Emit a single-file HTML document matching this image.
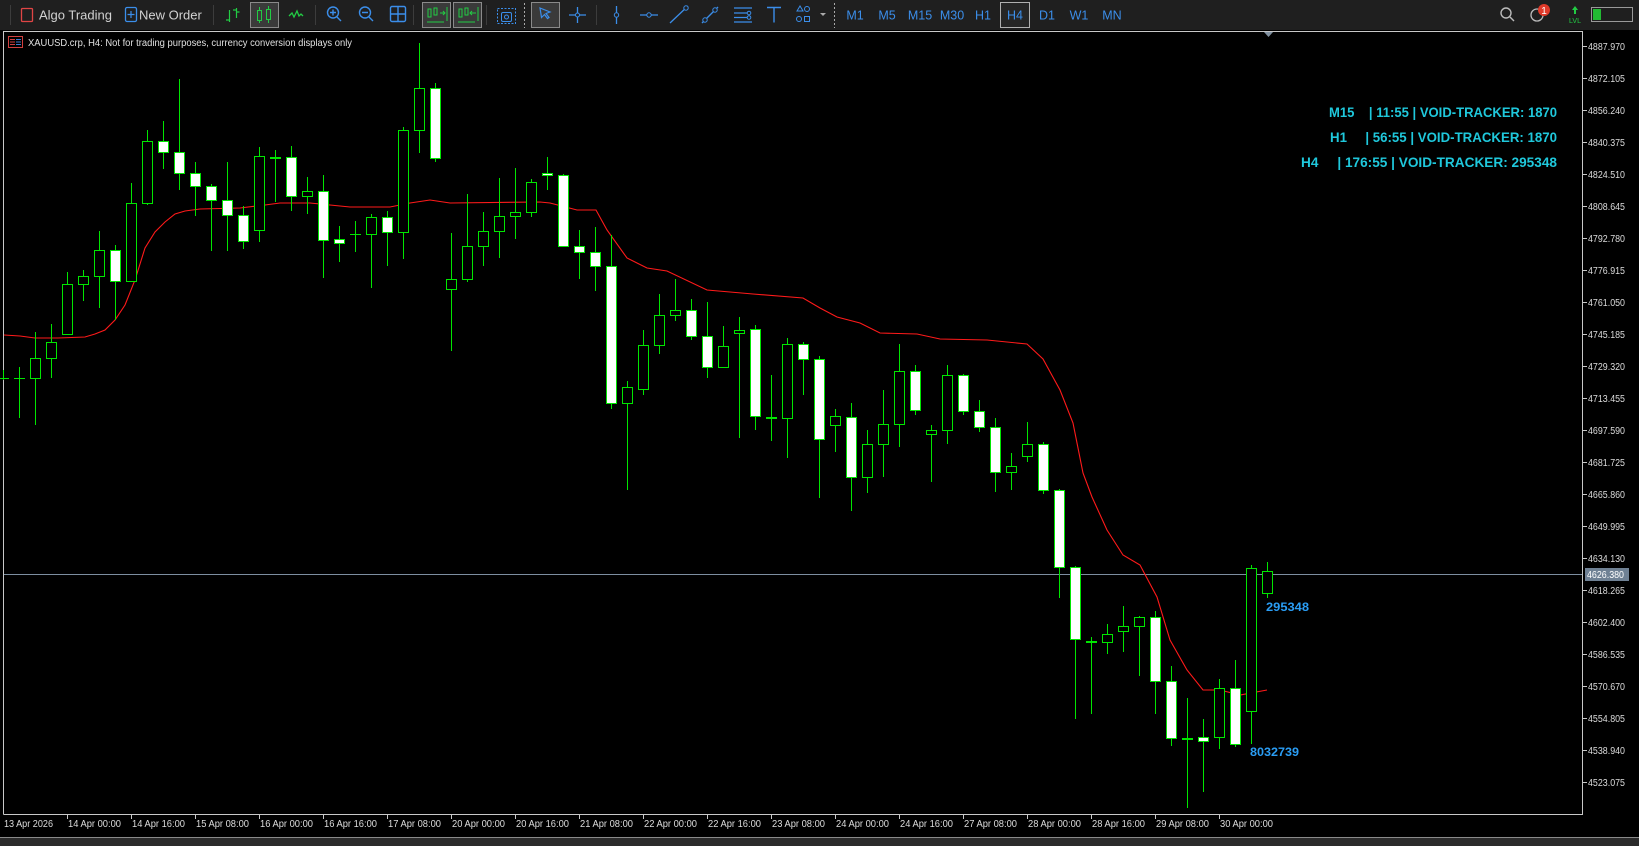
<!DOCTYPE html>
<html><head><meta charset="utf-8"><style>
html,body{margin:0;padding:0;background:#000;width:1639px;height:846px;overflow:hidden}
svg{display:block}
text{font-family:"Liberation Sans",sans-serif}
</style></head><body>
<svg width="1639" height="846" viewBox="0 0 1639 846" xmlns="http://www.w3.org/2000/svg">
<rect width="1639" height="846" fill="#000"/>
<!-- toolbar -->
<rect x="0" y="0" width="1639" height="30" fill="#1f1f1f"/>
<g stroke="#3c3c3c"><line x1="213.5" y1="5" x2="213.5" y2="25"/><line x1="315.5" y1="5" x2="315.5" y2="25"/><line x1="413.5" y1="5" x2="413.5" y2="25"/><line x1="486.5" y1="5" x2="486.5" y2="25"/><line x1="596.5" y1="5" x2="596.5" y2="25"/><line x1="10.5" y1="5" x2="10.5" y2="25"/></g>
<line x1="524.5" y1="3" x2="524.5" y2="28" stroke="#aaa" stroke-dasharray="2,2"/>
<line x1="834.5" y1="3" x2="834.5" y2="28" stroke="#aaa" stroke-dasharray="2,2"/>
<rect x="21.5" y="8.5" width="11" height="13" rx="1" fill="none" stroke="#e04545" stroke-width="1.3"/>
<text x="39" y="19.5" font-size="13" fill="#d2d2d2">Algo Trading</text>
<rect x="125.5" y="7.5" width="11" height="14" rx="1.5" fill="none" stroke="#3b8eea" stroke-width="1.3"/>
<path d="M131 11v7M127.5 14.5h7" stroke="#3b8eea" stroke-width="1.2"/>
<text x="139" y="19.5" font-size="13" fill="#d2d2d2">New Order</text>
<path d="M229.5 10v12M226 20h3.5M233 10h3M236.5 8v10M236.5 12h3" stroke="#22cc44" stroke-width="1.2" fill="none"/>
<rect x="250.5" y="2.5" width="28" height="25" fill="#3a3a3a" stroke="#8a8a8a"/>
<rect x="257.5" y="10.5" width="4" height="10" fill="none" stroke="#22cc44"/><rect x="266.5" y="9.5" width="4" height="10" fill="none" stroke="#22cc44"/>
<path d="M259.5 7v3M259.5 21v2M268.5 6v3M268.5 20v3" stroke="#22cc44"/>
<path d="M289 16l3-3 2 4 3-6 2 5 2-2 2 2" stroke="#22cc44" fill="none" stroke-width="1.3"/>
<circle cx="333" cy="12.5" r="5.5" fill="none" stroke="#3b8eea" stroke-width="1.4"/><path d="M337 17l4 4M330 12.5h6M333 9.5v6" stroke="#3b8eea" stroke-width="1.4"/>
<circle cx="365" cy="12.5" r="5.5" fill="none" stroke="#3b8eea" stroke-width="1.4"/><path d="M369 17l4 4M362 12.5h6" stroke="#3b8eea" stroke-width="1.4"/>
<rect x="390.5" y="6.5" width="15" height="15" rx="1.5" fill="none" stroke="#3b8eea" stroke-width="1.4"/><path d="M398 6.5v15M390.5 14h15" stroke="#3b8eea" stroke-width="1.4"/>
<rect x="422.5" y="2.5" width="28" height="25" fill="#3a3a3a" stroke="#8a8a8a"/>
<rect x="453.5" y="2.5" width="28" height="25" fill="#3a3a3a" stroke="#8a8a8a"/>
<path d="M428 9h3v8h-3zM434 8h3v7h-3zM440 13h5M443 11l2 2-2 2M447 7v14M427 22h17" stroke="#22cc44" fill="none"/>
<path d="M459 9h3v8h-3zM465 8h3v7h-3zM470 13h6M472 11l-2 2 2 2M478 7v14M458 22h17" stroke="#22cc44" fill="none"/>
<rect x="497.5" y="8.5" width="18" height="15" fill="none" stroke="#3b8eea" stroke-dasharray="2,1.5"/><rect x="501.5" y="12.5" width="10" height="9" rx="1.5" fill="none" stroke="#3b8eea"/><circle cx="506.5" cy="17" r="2" fill="none" stroke="#3b8eea"/>
<rect x="531.5" y="2.5" width="28" height="25" fill="#3a3a3a" stroke="#8a8a8a"/>
<path d="M540 8l10 4-4 1.5 3 4-1.5 1-3-4-3 3z" fill="none" stroke="#3b8eea" stroke-width="1.2"/>
<path d="M577.5 7v16M569 15h17" stroke="#3b8eea" stroke-width="1.3"/><circle cx="577.5" cy="15" r="2" fill="#1f1f1f" stroke="#3b8eea"/>
<path d="M616.5 6v18" stroke="#3b8eea" stroke-width="1.3"/><circle cx="616.5" cy="15" r="2.2" fill="#1f1f1f" stroke="#3b8eea"/>
<path d="M640 15h18" stroke="#3b8eea" stroke-width="1.3"/><circle cx="649" cy="15" r="2.2" fill="#1f1f1f" stroke="#3b8eea"/>
<path d="M670 23l18-17" stroke="#3b8eea" stroke-width="1.3"/><circle cx="686" cy="8" r="2.2" fill="#1f1f1f" stroke="#3b8eea"/>
<path d="M702 23l16-16" stroke="#3b8eea" stroke-width="1.3"/><circle cx="705" cy="20" r="2.2" fill="#1f1f1f" stroke="#3b8eea"/><circle cx="715" cy="10" r="2.2" fill="#1f1f1f" stroke="#3b8eea"/>
<path d="M734 8h18M734 13h13M734 17.5h13M734 22h18" stroke="#3b8eea" stroke-width="1.3"/><circle cx="749" cy="13" r="1.8" fill="#1f1f1f" stroke="#3b8eea"/><circle cx="749" cy="17.5" r="1.8" fill="#1f1f1f" stroke="#3b8eea"/>
<path d="M767 7.5h14M774 7.5v15" stroke="#3b8eea" stroke-width="1.4"/>
<path d="M797 11l3-5 3 5z" fill="none" stroke="#3b8eea"/><circle cx="807" cy="9" r="2.5" fill="none" stroke="#3b8eea"/><circle cx="799" cy="19" r="2.5" fill="none" stroke="#3b8eea"/><rect x="804.5" y="16.5" width="5" height="5" fill="none" stroke="#3b8eea"/>
<path d="M820 13h6l-3 3z" fill="#aaa"/>
<g font-size="12.5" fill="#3b8eea" text-anchor="middle">
<text x="855" y="19.5">M1</text><text x="887" y="19.5">M5</text><text x="920" y="19.5">M15</text><text x="952" y="19.5">M30</text><text x="983" y="19.5">H1</text>
<rect x="1000.5" y="2.5" width="29" height="25" fill="#262626" stroke="#b0b0b0"/>
<text x="1015" y="19.5">H4</text><text x="1047" y="19.5">D1</text><text x="1079" y="19.5">W1</text><text x="1112" y="19.5">MN</text></g>
<circle cx="1506" cy="13" r="5" fill="none" stroke="#bbb" stroke-width="1.4"/><path d="M1510 17l4 4" stroke="#bbb" stroke-width="1.4"/>
<circle cx="1537" cy="15" r="6" fill="none" stroke="#bbb" stroke-width="1.3"/>
<circle cx="1544" cy="10" r="6" fill="#e03a2a"/><text x="1544" y="14" font-size="10" fill="#fff" text-anchor="middle">1</text>
<path d="M1575 6l-3 4h2v4h2v-4h2z" fill="#22cc44"/><text x="1575" y="23" font-size="7" fill="#22cc44" text-anchor="middle">LVL</text>
<rect x="1591.5" y="7.5" width="41" height="14" fill="none" stroke="#999"/><rect x="1593" y="9" width="8" height="11" fill="#22bb33"/>
<path d="M3.5 814.5V31.5H1582.5V814.5H3.5" fill="none" stroke="#c8c8c8"/>
<path d="M1264 32h9l-4.5 5z" fill="#8090a0"/>
<rect x="8.5" y="36.5" width="14" height="11" fill="none" stroke="#d04040"/><path d="M10 39.5h5M10 42h5M10 44.5h5" stroke="#d04040"/><path d="M16 39.5h5M16 42h5M16 44.5h5" stroke="#3b7ad0"/>
<text x="28" y="46" font-size="10" fill="#e0e0e0" textLength="324" lengthAdjust="spacingAndGlyphs">XAUUSD.crp, H4:  Not for trading purposes, currency conversion displays only</text>
<g font-size="10" fill="#dcdcdc" stroke="none">
<text x="1588" y="50" textLength="37" lengthAdjust="spacingAndGlyphs">4887.970</text>
<text x="1588" y="82" textLength="37" lengthAdjust="spacingAndGlyphs">4872.105</text>
<text x="1588" y="114" textLength="37" lengthAdjust="spacingAndGlyphs">4856.240</text>
<text x="1588" y="146" textLength="37" lengthAdjust="spacingAndGlyphs">4840.375</text>
<text x="1588" y="178" textLength="37" lengthAdjust="spacingAndGlyphs">4824.510</text>
<text x="1588" y="210" textLength="37" lengthAdjust="spacingAndGlyphs">4808.645</text>
<text x="1588" y="242" textLength="37" lengthAdjust="spacingAndGlyphs">4792.780</text>
<text x="1588" y="274" textLength="37" lengthAdjust="spacingAndGlyphs">4776.915</text>
<text x="1588" y="306" textLength="37" lengthAdjust="spacingAndGlyphs">4761.050</text>
<text x="1588" y="338" textLength="37" lengthAdjust="spacingAndGlyphs">4745.185</text>
<text x="1588" y="370" textLength="37" lengthAdjust="spacingAndGlyphs">4729.320</text>
<text x="1588" y="402" textLength="37" lengthAdjust="spacingAndGlyphs">4713.455</text>
<text x="1588" y="434" textLength="37" lengthAdjust="spacingAndGlyphs">4697.590</text>
<text x="1588" y="466" textLength="37" lengthAdjust="spacingAndGlyphs">4681.725</text>
<text x="1588" y="498" textLength="37" lengthAdjust="spacingAndGlyphs">4665.860</text>
<text x="1588" y="530" textLength="37" lengthAdjust="spacingAndGlyphs">4649.995</text>
<text x="1588" y="562" textLength="37" lengthAdjust="spacingAndGlyphs">4634.130</text>
<text x="1588" y="594" textLength="37" lengthAdjust="spacingAndGlyphs">4618.265</text>
<text x="1588" y="626" textLength="37" lengthAdjust="spacingAndGlyphs">4602.400</text>
<text x="1588" y="658" textLength="37" lengthAdjust="spacingAndGlyphs">4586.535</text>
<text x="1588" y="690" textLength="37" lengthAdjust="spacingAndGlyphs">4570.670</text>
<text x="1588" y="722" textLength="37" lengthAdjust="spacingAndGlyphs">4554.805</text>
<text x="1588" y="754" textLength="37" lengthAdjust="spacingAndGlyphs">4538.940</text>
<text x="1588" y="786" textLength="37" lengthAdjust="spacingAndGlyphs">4523.075</text>
</g>
<g stroke="#c8c8c8"><path d="M1583 46.5h4M1583 78.5h4M1583 110.5h4M1583 142.5h4M1583 174.5h4M1583 206.5h4M1583 238.5h4M1583 270.5h4M1583 302.5h4M1583 334.5h4M1583 366.5h4M1583 398.5h4M1583 430.5h4M1583 462.5h4M1583 494.5h4M1583 526.5h4M1583 558.5h4M1583 590.5h4M1583 622.5h4M1583 654.5h4M1583 686.5h4M1583 718.5h4M1583 750.5h4M1583 782.5h4"/></g>
<g stroke="#c8c8c8"><path d="M67.5 815v4M131.5 815v4M195.5 815v4M259.5 815v4M323.5 815v4M387.5 815v4M451.5 815v4M515.5 815v4M579.5 815v4M643.5 815v4M707.5 815v4M771.5 815v4M835.5 815v4M899.5 815v4M963.5 815v4M1027.5 815v4M1091.5 815v4M1155.5 815v4M1219.5 815v4"/></g>
<g font-size="10" fill="#dcdcdc">
<text x="4" y="827" textLength="49" lengthAdjust="spacingAndGlyphs">13 Apr 2026</text>
<text x="68" y="827" textLength="53" lengthAdjust="spacingAndGlyphs">14 Apr 00:00</text>
<text x="132" y="827" textLength="53" lengthAdjust="spacingAndGlyphs">14 Apr 16:00</text>
<text x="196" y="827" textLength="53" lengthAdjust="spacingAndGlyphs">15 Apr 08:00</text>
<text x="260" y="827" textLength="53" lengthAdjust="spacingAndGlyphs">16 Apr 00:00</text>
<text x="324" y="827" textLength="53" lengthAdjust="spacingAndGlyphs">16 Apr 16:00</text>
<text x="388" y="827" textLength="53" lengthAdjust="spacingAndGlyphs">17 Apr 08:00</text>
<text x="452" y="827" textLength="53" lengthAdjust="spacingAndGlyphs">20 Apr 00:00</text>
<text x="516" y="827" textLength="53" lengthAdjust="spacingAndGlyphs">20 Apr 16:00</text>
<text x="580" y="827" textLength="53" lengthAdjust="spacingAndGlyphs">21 Apr 08:00</text>
<text x="644" y="827" textLength="53" lengthAdjust="spacingAndGlyphs">22 Apr 00:00</text>
<text x="708" y="827" textLength="53" lengthAdjust="spacingAndGlyphs">22 Apr 16:00</text>
<text x="772" y="827" textLength="53" lengthAdjust="spacingAndGlyphs">23 Apr 08:00</text>
<text x="836" y="827" textLength="53" lengthAdjust="spacingAndGlyphs">24 Apr 00:00</text>
<text x="900" y="827" textLength="53" lengthAdjust="spacingAndGlyphs">24 Apr 16:00</text>
<text x="964" y="827" textLength="53" lengthAdjust="spacingAndGlyphs">27 Apr 08:00</text>
<text x="1028" y="827" textLength="53" lengthAdjust="spacingAndGlyphs">28 Apr 00:00</text>
<text x="1092" y="827" textLength="53" lengthAdjust="spacingAndGlyphs">28 Apr 16:00</text>
<text x="1156" y="827" textLength="53" lengthAdjust="spacingAndGlyphs">29 Apr 08:00</text>
<text x="1220" y="827" textLength="53" lengthAdjust="spacingAndGlyphs">30 Apr 00:00</text>
</g>
<rect x="0" y="837" width="1639" height="1" fill="#8a8a8a"/>
<rect x="0" y="838" width="1639" height="8" fill="#2b2b2b"/>
<line x1="4" y1="574.5" x2="1582" y2="574.5" stroke="#7d8ea0"/>
<rect x="1585" y="568" width="44" height="13" fill="#6f8194"/>
<text x="1587" y="578" font-size="10" fill="#fff" textLength="37" lengthAdjust="spacingAndGlyphs">4626.380</text>
<polyline fill="none" stroke="#ff1a1a" stroke-width="1.1" points="4,335 20,336 35,338 58,338 85,337 95,334 105,330 115,320 125,305 135,280 145,248 155,232 165,222 175,214 185,211 200,209 240,208 265,205 280,203 310,203 330,205 350,207 390,207 410,203 430,200 450,203 540,202 550,203 577,210 596,210 607,230 627,258 647,268 667,271 707,290 753,294 803,298 820,308 837,317 860,323 880,333 917,334 940,339 987,340 1027,344 1043,359 1060,390 1073,423 1083,473 1092,497 1107,530 1123,555 1140,565 1157,597 1170,640 1187,670 1203,690 1220,690 1240,695 1267,690"/>
<g fill="#00e600" stroke="none">
<rect x="3" y="370" width="1" height="10"/><rect x="19" y="367" width="1" height="51"/><rect x="35" y="332" width="1" height="93"/><rect x="51" y="324" width="1" height="54"/><rect x="67" y="272" width="1" height="62"/><rect x="83" y="270" width="1" height="31"/><rect x="99" y="231" width="1" height="77"/><rect x="115" y="245" width="1" height="75"/><rect x="131" y="183" width="1" height="98"/><rect x="147" y="130" width="1" height="75"/><rect x="163" y="121" width="1" height="48"/><rect x="179" y="79" width="1" height="111"/><rect x="195" y="162" width="1" height="54"/><rect x="211" y="184" width="1" height="67"/><rect x="227" y="162" width="1" height="89"/><rect x="243" y="206" width="1" height="43"/><rect x="259" y="147" width="1" height="95"/><rect x="275" y="150" width="1" height="52"/><rect x="291" y="146" width="1" height="65"/><rect x="307" y="177" width="1" height="37"/><rect x="323" y="175" width="1" height="103"/><rect x="339" y="226" width="1" height="36"/><rect x="355" y="221" width="1" height="31"/><rect x="371" y="214" width="1" height="74"/><rect x="387" y="211" width="1" height="55"/><rect x="403" y="127" width="1" height="132"/><rect x="419" y="43" width="1" height="110"/><rect x="435" y="83" width="1" height="79"/><rect x="451" y="233" width="1" height="118"/><rect x="467" y="194" width="1" height="88"/><rect x="483" y="212" width="1" height="54"/><rect x="499" y="178" width="1" height="80"/><rect x="515" y="168" width="1" height="71"/><rect x="531" y="179" width="1" height="38"/><rect x="547" y="157" width="1" height="33"/><rect x="563" y="174" width="1" height="72"/><rect x="579" y="230" width="1" height="49"/><rect x="595" y="227" width="1" height="64"/><rect x="611" y="235" width="1" height="174"/><rect x="627" y="381" width="1" height="109"/><rect x="643" y="330" width="1" height="65"/><rect x="659" y="294" width="1" height="60"/><rect x="675" y="279" width="1" height="42"/><rect x="691" y="299" width="1" height="41"/><rect x="707" y="302" width="1" height="76"/><rect x="723" y="326" width="1" height="41"/><rect x="739" y="317" width="1" height="121"/><rect x="755" y="325" width="1" height="105"/><rect x="771" y="375" width="1" height="66"/><rect x="787" y="338" width="1" height="120"/><rect x="803" y="342" width="1" height="53"/><rect x="819" y="356" width="1" height="142"/><rect x="835" y="409" width="1" height="43"/><rect x="851" y="403" width="1" height="108"/><rect x="867" y="430" width="1" height="63"/><rect x="883" y="390" width="1" height="87"/><rect x="899" y="344" width="1" height="103"/><rect x="915" y="365" width="1" height="50"/><rect x="931" y="425" width="1" height="57"/><rect x="947" y="365" width="1" height="79"/><rect x="963" y="374" width="1" height="41"/><rect x="979" y="400" width="1" height="32"/><rect x="995" y="418" width="1" height="74"/><rect x="1011" y="453" width="1" height="37"/><rect x="1027" y="422" width="1" height="40"/><rect x="1043" y="442" width="1" height="52"/><rect x="1059" y="489" width="1" height="109"/><rect x="1075" y="566" width="1" height="153"/><rect x="1091" y="637" width="1" height="77"/><rect x="1107" y="624" width="1" height="30"/><rect x="1123" y="606" width="1" height="46"/><rect x="1139" y="616" width="1" height="60"/><rect x="1155" y="611" width="1" height="103"/><rect x="1171" y="666" width="1" height="80"/><rect x="1187" y="698" width="1" height="110"/><rect x="1203" y="719" width="1" height="73"/><rect x="1219" y="679" width="1" height="70"/><rect x="1235" y="660" width="1" height="87"/><rect x="1251" y="565" width="1" height="179"/><rect x="1267" y="562" width="1" height="36"/>
<rect x="-2" y="378" width="11" height="1"/><rect x="14" y="378" width="11" height="1"/><rect x="270" y="157" width="11" height="2"/><rect x="350" y="234" width="11" height="1"/><rect x="766" y="417" width="11" height="2"/><rect x="1086" y="641" width="11" height="2"/><rect x="1182" y="738" width="11" height="2"/>
</g>
<g fill="#000" stroke="#00e600" stroke-width="1">
<rect x="30.5" y="358.5" width="10" height="20"/><rect x="46.5" y="342.5" width="10" height="16"/><rect x="62.5" y="284.5" width="10" height="50"/><rect x="78.5" y="276.5" width="10" height="8"/><rect x="94.5" y="250.5" width="10" height="26"/><rect x="126.5" y="203.5" width="10" height="78"/><rect x="142.5" y="141.5" width="10" height="62"/><rect x="254.5" y="156.5" width="10" height="74"/><rect x="302.5" y="191.5" width="10" height="5"/><rect x="366.5" y="217.5" width="10" height="17"/><rect x="398.5" y="130.5" width="10" height="102"/><rect x="414.5" y="88.5" width="10" height="42"/><rect x="446.5" y="279.5" width="10" height="10"/><rect x="462.5" y="246.5" width="10" height="33"/><rect x="478.5" y="231.5" width="10" height="15"/><rect x="494.5" y="216.5" width="10" height="15"/><rect x="510.5" y="212.5" width="10" height="4"/><rect x="526.5" y="182.5" width="10" height="30"/><rect x="622.5" y="387.5" width="10" height="16"/><rect x="638.5" y="345.5" width="10" height="44"/><rect x="654.5" y="315.5" width="10" height="30"/><rect x="670.5" y="310.5" width="10" height="5"/><rect x="718.5" y="346.5" width="10" height="21"/><rect x="734.5" y="330.5" width="10" height="3"/><rect x="782.5" y="344.5" width="10" height="74"/><rect x="830.5" y="416.5" width="10" height="9"/><rect x="862.5" y="444.5" width="10" height="33"/><rect x="878.5" y="424.5" width="10" height="20"/><rect x="894.5" y="371.5" width="10" height="53"/><rect x="926.5" y="430.5" width="10" height="4"/><rect x="942.5" y="375.5" width="10" height="55"/><rect x="1006.5" y="466.5" width="10" height="6"/><rect x="1022.5" y="444.5" width="10" height="12"/><rect x="1102.5" y="634.5" width="10" height="8"/><rect x="1118.5" y="626.5" width="10" height="5"/><rect x="1134.5" y="617.5" width="10" height="9"/><rect x="1214.5" y="688.5" width="10" height="49"/><rect x="1246.5" y="568.5" width="10" height="143"/><rect x="1262.5" y="571.5" width="10" height="22"/>
</g>
<g fill="#fff" stroke="#00e600" stroke-width="1">
<rect x="110.5" y="250.5" width="10" height="31"/><rect x="158.5" y="141.5" width="10" height="11"/><rect x="174.5" y="152.5" width="10" height="21"/><rect x="190.5" y="173.5" width="10" height="13"/><rect x="206.5" y="186.5" width="10" height="14"/><rect x="222.5" y="200.5" width="10" height="15"/><rect x="238.5" y="215.5" width="10" height="26"/><rect x="286.5" y="157.5" width="10" height="39"/><rect x="318.5" y="191.5" width="10" height="49"/><rect x="334.5" y="239.5" width="10" height="4"/><rect x="382.5" y="217.5" width="10" height="15"/><rect x="430.5" y="88.5" width="10" height="70"/><rect x="542.5" y="173.5" width="10" height="2"/><rect x="558.5" y="175.5" width="10" height="71"/><rect x="574.5" y="246.5" width="10" height="6"/><rect x="590.5" y="252.5" width="10" height="14"/><rect x="606.5" y="266.5" width="10" height="137"/><rect x="686.5" y="310.5" width="10" height="26"/><rect x="702.5" y="336.5" width="10" height="31"/><rect x="750.5" y="329.5" width="10" height="87"/><rect x="798.5" y="344.5" width="10" height="15"/><rect x="814.5" y="359.5" width="10" height="80"/><rect x="846.5" y="417.5" width="10" height="60"/><rect x="910.5" y="371.5" width="10" height="39"/><rect x="958.5" y="375.5" width="10" height="36"/><rect x="974.5" y="411.5" width="10" height="16"/><rect x="990.5" y="427.5" width="10" height="45"/><rect x="1038.5" y="444.5" width="10" height="46"/><rect x="1054.5" y="490.5" width="10" height="77"/><rect x="1070.5" y="567.5" width="10" height="72"/><rect x="1150.5" y="617.5" width="10" height="64"/><rect x="1166.5" y="681.5" width="10" height="57"/><rect x="1198.5" y="737.5" width="10" height="4"/><rect x="1230.5" y="688.5" width="10" height="56"/>
</g>
<text x="1266" y="611" font-size="12" font-weight="bold" fill="#2a9df4" textLength="43" lengthAdjust="spacingAndGlyphs">295348</text>
<text x="1250" y="756" font-size="12" font-weight="bold" fill="#2a9df4" textLength="49" lengthAdjust="spacingAndGlyphs">8032739</text>
<g font-size="14" font-weight="bold" fill="#1fc8dc">
<text x="1329" y="117" textLength="228" lengthAdjust="spacingAndGlyphs" xml:space="preserve">M15    | 11:55 | VOID-TRACKER: 1870</text>
<text x="1330" y="142" textLength="227" lengthAdjust="spacingAndGlyphs" xml:space="preserve">H1     | 56:55 | VOID-TRACKER: 1870</text>
<text x="1301" y="167" textLength="256" lengthAdjust="spacingAndGlyphs" xml:space="preserve">H4     | 176:55 | VOID-TRACKER: 295348</text>
</g>
</svg>
</body></html>
